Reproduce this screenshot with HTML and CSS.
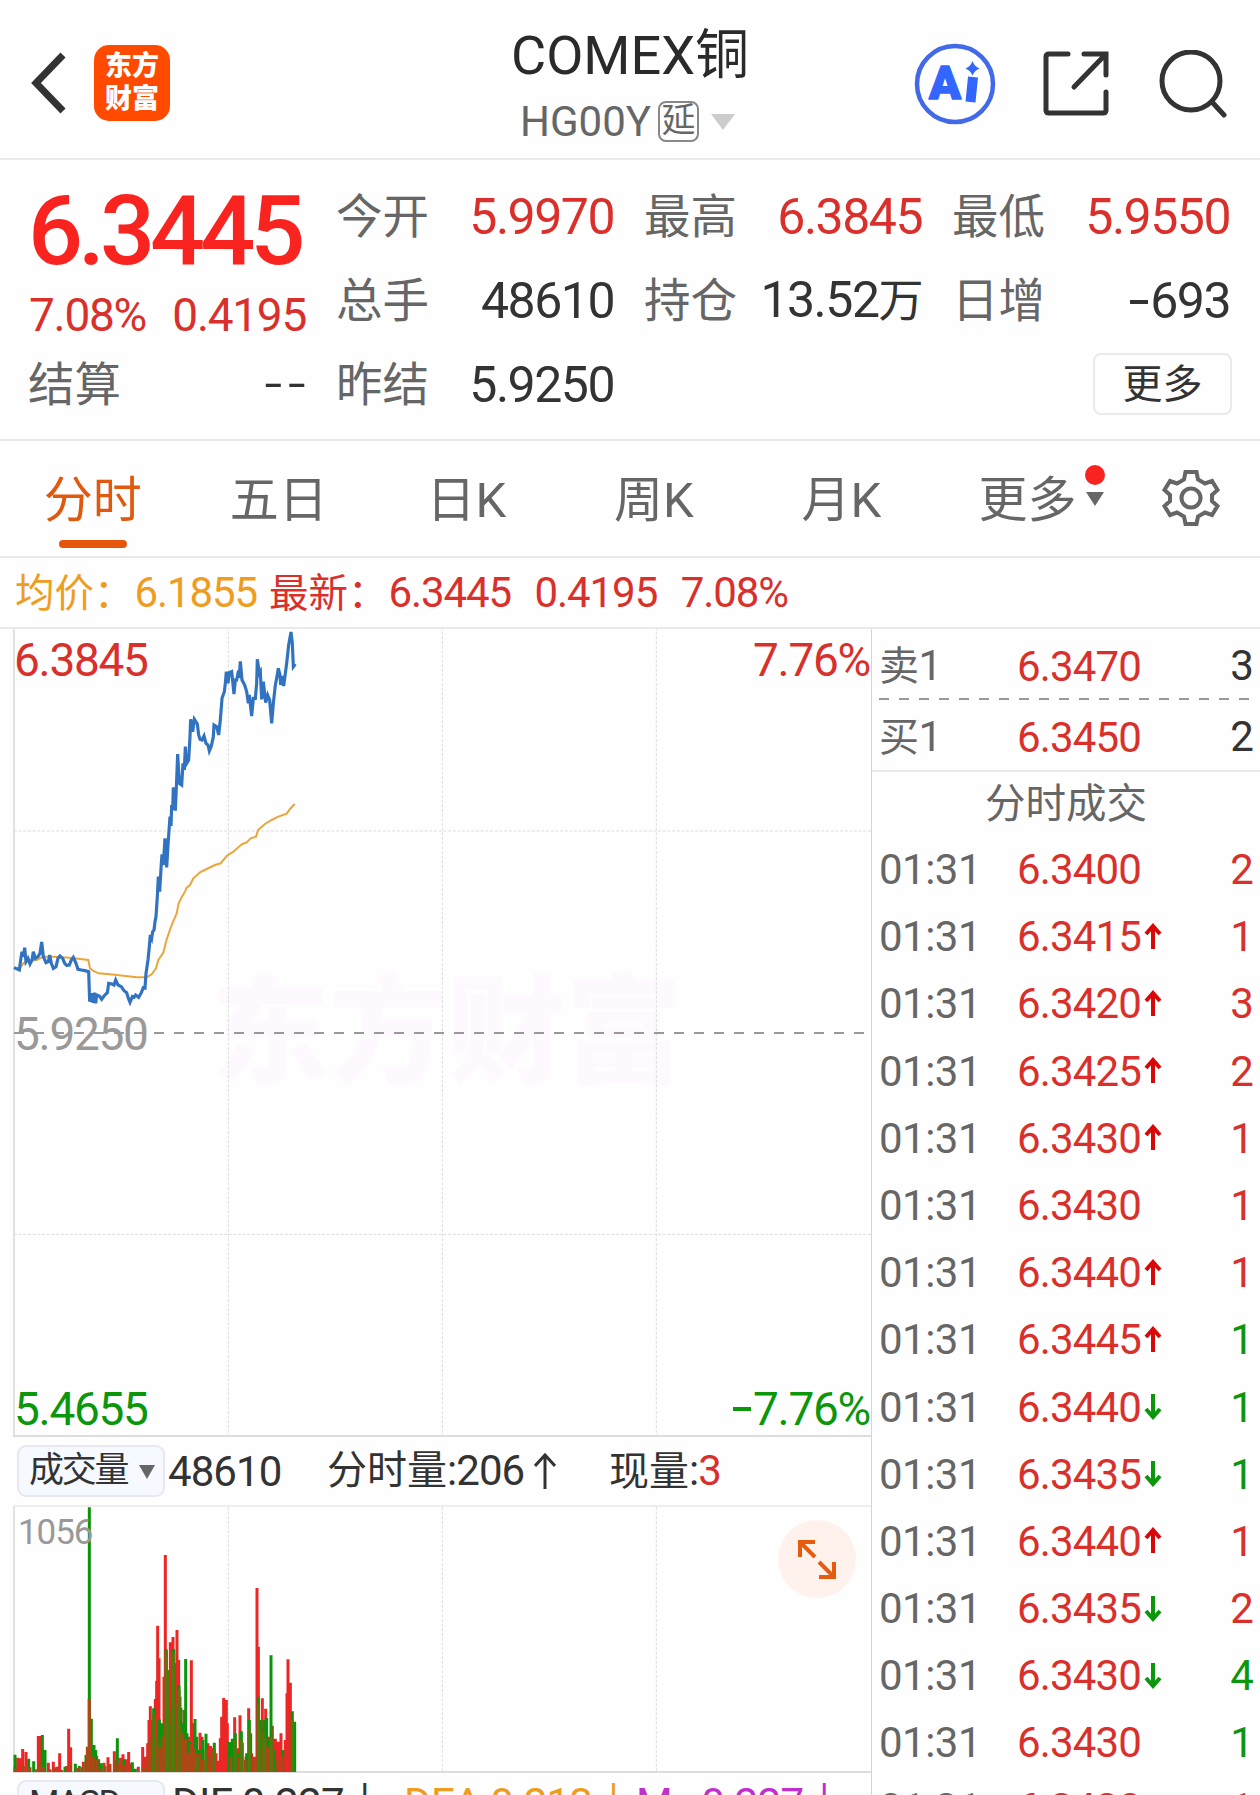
FILE: index.html
```html
<!DOCTYPE html>
<html lang="zh-CN">
<head>
    <meta charset="UTF-8">
    <meta name="viewport" content="width=device-width, initial-scale=1.0">
    <title>COMEX铜 HG00Y</title>
    <link rel="stylesheet" href="styles.css">
</head>
<body>
    <svg class="defs" width="0" height="0">
        <symbol id="up" viewBox="0 0 18 27"><path d="M9 26V3M2 11L9 3L16 11" fill="none" stroke="currentColor" stroke-width="4"/></symbol>
        <symbol id="down" viewBox="0 0 18 27"><path d="M9 1V24M2 16L9 24L16 16" fill="none" stroke="currentColor" stroke-width="4"/></symbol>
    </svg>

    <header class="header">
        <div class="header-left">
            <svg class="back" width="36" height="64" viewBox="0 0 36 64"><path d="M32 4L5 32L32 60" fill="none" stroke="#333" stroke-width="7"/></svg>
            <div class="logo"><span>东方</span><span>财富</span></div>
        </div>
        <div class="title">
            <h1>COMEX铜</h1>
            <div class="code">HG00Y<span class="delay">延</span><svg width="24" height="16" viewBox="0 0 24 16"><path d="M0 0H24L12 16Z" fill="#ccc"/></svg></div>
        </div>
        <div class="header-right">
            <svg width="82" height="82" viewBox="0 0 82 82">
                <circle cx="41" cy="41" r="38" fill="none" stroke="#4169ea" stroke-width="4.5"/>
                <text x="15" y="56" class="ai-text">A</text>
                <path d="M58.500 39L57 54" stroke="#36f" stroke-width="10" stroke-linecap="square"/>
                <path d="M58.500 18Q60.500 23.500 65.500 25.500Q60.500 27.500 58.500 32.500Q56.500 27.500 51.500 25.500Q56.500 23.500 58.500 18Z" fill="#36f"/>
            </svg>
            <svg class="share" width="66" height="66" viewBox="0 0 66 66" fill="none" stroke="#333" stroke-width="5" stroke-linecap="round">
                <path d="M25 3H6Q3 3 3 6V59Q3 62 6 62H60Q63 62 63 59V41M63 24V3H41M62 4L31 36"/>
            </svg>
            <svg width="68" height="68" viewBox="0 0 68 68" fill="none" stroke="#333" stroke-width="5" stroke-linecap="round">
                <circle cx="32" cy="31" r="29"/><path d="M53 52L65 65"/>
            </svg>
        </div>
    </header>

    <section class="quote">
        <div class="price-box">
            <div class="price">6.3445</div>
            <div class="change"><span>7.08%</span><span>0.4195</span></div>
        </div>
        <div class="cell"><label>今开</label><span class="red">5.9970</span></div>
        <div class="cell"><label>最高</label><span class="red">6.3845</span></div>
        <div class="cell"><label>最低</label><span class="red">5.9550</span></div>
        <div class="cell"><label>总手</label><span>48610</span></div>
        <div class="cell"><label>持仓</label><span>13.52<i>万</i></span></div>
        <div class="cell"><label>日增</label><span><b class="dash"></b>693</span></div>
        <div class="cell"><label>结算</label><span class="dashes">--</span></div>
        <div class="cell"><label>昨结</label><span>5.9250</span></div>
        <div class="more"><button>更多</button></div>
    </section>

    <nav class="tabs">
        <a class="active">分时</a>
        <a>五日</a>
        <a>日K</a>
        <a>周K</a>
        <a>月K</a>
        <a class="tab-more">更多<span class="mark"><i class="dot"></i><svg width="18" height="14" viewBox="0 0 18 14"><path d="M0 0H18L9 14Z" fill="#666"/></svg></span></a>
        <svg class="gear" width="60" height="60" viewBox="0 0 60 60" fill="none" stroke="#666" stroke-width="4">
            <path d="M24.500 4H35.500L37 11.500L44 15.500L51 13L56.500 22L51 27V33L56.500 38L51 47L44 44.500L37 48.500L35.500 56H24.500L23 48.500L16 44.500L9 47L3.500 38L9 33V27L3.500 22L9 13L16 15.500L23 11.500Z"/>
            <circle cx="30" cy="30" r="9.500"/>
        </svg>
    </nav>

    <div class="info">
        <span class="avg"><em>均价：</em>6.1855</span>
        <span class="last"><em>最新：</em>6.3445</span>
        <span>0.4195</span>
        <span>7.08%</span>
    </div>

    <main class="main">
        <div class="charts">
            <div class="chart">
                <svg width="858" height="807" viewBox="39 27 2574 2421" fill="none">
                    <text class="watermark" x="636" y="1361">东方财富</text>
                    <path class="grid" d="M685 21V2450M1327 21V2450M1969 21V2450M42 633H2613M42 1843H2613"/>
                    <path d="M42 21V2450" stroke="#ddd" stroke-width="5"/>
                    <path d="M42 1239H2613" stroke="#999" stroke-width="6" stroke-dasharray="30 30"/>
                    <polyline stroke="#eba63a" stroke-width="6" points="42,1043 60,1045 70,1030 85,1022 110,1020 130,1010 160,1010 210,1013 265,1020 270,1045 280,1053 296,1060 330,1063 370,1067 410,1072 440,1072 455,1063 468,1045 475,1020 490,998 500,958 515,915 530,880 536,850 545,832 555,815 560,803 570,795 580,775 600,757 620,747 645,735 662,730 680,708 700,695 725,673 740,667 752,655 768,650 774,630 795,612 815,600 835,590 860,581 870,567 884,552"/>
                    <polyline stroke="#3173c0" stroke-width="9.5" points="42,1043 58,1050 62,1020 66,995 70,1010 74,983 78,1025 84,1015 90,1032 96,1020 100,995 106,1015 114,1010 120,1000 125,966 130,1010 138,1028 145,1025 149,1005 154,1030 160,1045 168,1040 174,1015 180,1008 188,1015 194,1030 200,1036 208,1035 214,1020 220,1012 228,1030 234,1048 244,1050 255,1052 266,1055 269,1145 274,1120 279,1148 284,1118 287,1150 290,1125 298,1128 305,1138 312,1128 322,1118 326,1090 336,1092 342,1095 347,1080 354,1095 364,1100 372,1112 380,1118 385,1135 390,1147 397,1130 402,1132 407,1125 416,1132 424,1118 430,1103 435,1104 438,1060 444,1020 448,980 451,945 455,955 458,935 462,930 465,905 468,890 472,830 475,770 479,815 484,730 486,703 490,735 495,655 500,742 505,660 510,590 513,618 515,555 518,570 520,502 526,572 530,480 533,402 538,490 545,495 549,430 553,450 556,380 559,432 566,420 570,350 572,298 578,335 583,298 592,312 596,345 600,358 606,360 612,348 618,370 624,375 628,393 634,378 640,350 642,315 650,320 656,345 661,300 666,235 673,215 676,190 679,155 684,190 688,158 695,155 702,222 706,180 710,180 714,160 718,165 721,124 726,180 734,195 740,215 745,250 748,225 755,288 760,235 766,235 770,190 772,118 778,160 781,155 785,238 790,185 797,248 803,225 809,240 815,310 820,250 826,195 831,170 835,145 840,165 842,195 846,168 851,198 856,160 860,130 866,75 873,36 877,70 880,140 886,132"/>
                </svg>
                <span class="lab top-left red">6.3845</span>
                <span class="lab top-right red">7.76%</span>
                <span class="lab mid-left">5.9250</span>
                <span class="lab bottom-left green">5.4655</span>
                <span class="lab bottom-right green"><b class="dash"></b>7.76%</span>
            </div>

            <div class="vol-head">
                <span class="pill">成交量<svg width="16" height="14" viewBox="0 0 16 14"><path d="M0 0H16L8 14Z" fill="#666"/></svg></span>
                <span class="vol-total">48610</span>
                <span class="vol-min"><em>分时量</em>:206<svg width="22" height="36" viewBox="0 0 22 36"><path d="M11 36V2M1 13L11 2L21 13" fill="none" stroke="#333" stroke-width="3"/></svg></span>
                <span class="vol-now"><em>现量</em>:<span class="red">3</span></span>
            </div>

            <div class="volume">
                <svg width="858" height="265" viewBox="39 51 2574 795" fill="none">
                    <path class="grid" d="M685 51V847M1327 51V847M1969 51V847"/>
                    <path d="M42 51V847" stroke="#ddd" stroke-width="5"/>
                    <g stroke-width="9">
                        <path id="volRed" stroke="#ec2525"/>
                        <path id="volGreen" stroke="#0b930b"/>
                        <path id="volMix" stroke="#ad4716"/>
                        <path id="volDark" stroke="#4d7d0b"/>
                    </g>
                </svg>
                <span class="vol-max">1056</span>
                <div class="expand">
                    <svg width="38" height="40" viewBox="0 0 38 40" fill="none" stroke="#e55b10" stroke-width="4">
                        <path d="M2 18V3H17M3 4L17 18M36 23V38H21M35 37L21 23"/>
                    </svg>
                </div>
            </div>

            <div class="vol-head macd">
                <span class="pill">MACD</span>
                <span class="dif">DIF:0.227↓</span>
                <span class="dea">DEA:0.213↓</span>
                <span class="m">M: 0.227↓</span>
            </div>
        </div>

        <aside class="side">
            <div class="row ask"><span class="name"><em>卖</em>1</span><span class="red">6.3470</span><span class="qty">3</span></div>
            <svg class="split" width="372" height="2"><path d="M0 1H372" stroke="#999" stroke-width="2" stroke-dasharray="10 10"/></svg>
            <div class="row bid"><span class="name"><em>买</em>1</span><span class="red">6.3450</span><span class="qty">2</span></div>
            <h2>分时成交</h2>
            <div class="ticks">
                <div class="row"><span>01:31</span><span class="red">6.3400</span><span class="qty red">2</span></div>
                <div class="row"><span>01:31</span><span class="red">6.3415<svg class="up"><use href="#up"/></svg></span><span class="qty red">1</span></div>
                <div class="row"><span>01:31</span><span class="red">6.3420<svg class="up"><use href="#up"/></svg></span><span class="qty red">3</span></div>
                <div class="row"><span>01:31</span><span class="red">6.3425<svg class="up"><use href="#up"/></svg></span><span class="qty red">2</span></div>
                <div class="row"><span>01:31</span><span class="red">6.3430<svg class="up"><use href="#up"/></svg></span><span class="qty red">1</span></div>
                <div class="row"><span>01:31</span><span class="red">6.3430</span><span class="qty red">1</span></div>
                <div class="row"><span>01:31</span><span class="red">6.3440<svg class="up"><use href="#up"/></svg></span><span class="qty red">1</span></div>
                <div class="row"><span>01:31</span><span class="red">6.3445<svg class="up"><use href="#up"/></svg></span><span class="qty green">1</span></div>
                <div class="row"><span>01:31</span><span class="red">6.3440<svg class="down"><use href="#down"/></svg></span><span class="qty green">1</span></div>
                <div class="row"><span>01:31</span><span class="red">6.3435<svg class="down"><use href="#down"/></svg></span><span class="qty green">1</span></div>
                <div class="row"><span>01:31</span><span class="red">6.3440<svg class="up"><use href="#up"/></svg></span><span class="qty red">1</span></div>
                <div class="row"><span>01:31</span><span class="red">6.3435<svg class="down"><use href="#down"/></svg></span><span class="qty red">2</span></div>
                <div class="row"><span>01:31</span><span class="red">6.3430<svg class="down"><use href="#down"/></svg></span><span class="qty green">4</span></div>
                <div class="row"><span>01:31</span><span class="red">6.3430</span><span class="qty green">1</span></div>
                <div class="row last-row"><span>01:31</span><span class="red">6.3430</span><span class="qty red">1</span></div>
            </div>
        </aside>
    </main>

    <script>
        // x,top pairs, every bar stands on y = 847
        const volume = {
            volRed: '45,830 53,803 60,805 68,777 78,786 115,738 119,738 145,818 160,815 172,830 179,790 206,716 212,772 250,815 268,627 290,797 312,818 324,802 343,784 360,803 369,793 379,808 386,786 415,830 428,771 437,800 443,760 447,690 451,649 460,690 466,627 470,572 473,407 477,505 492,560 496,195 505,540 511,457 519,441 525,520 531,420 536,510 540,620 546,700 552,660 560,750 566,740 574,511 578,700 600,728 606,740 624,760 632,768 640,775 648,790 655,812 661,745 665,680 671,624 679,630 682,700 704,682 711,775 720,676 727,758 738,800 746,655 755,790 762,800 771,294 775,470 787,625 797,656 806,740 817,707 826,746 834,755 843,730 856,750 861,610 864,508 871,578 874,700',
            volGreen: '45,794 86,806 101,814 127,735 135,780 195,830 226,821 238,828 258,795 268,52 274,686 282,765 287,780 296,808 304,820 352,745 372,808 397,817 406,836 461,655 478,688 485,700 499,478 521,478 537,586 543,655 549,700 557,507 561,730 570,755 585,687 590,740 598,780 608,750 618,731 635,790 643,758 688,756 697,746 706,730 714,790 724,724 740,790 748,690 752,730 775,620 780,690 792,690 800,684 808,750 813,496 822,780 848,780 877,664 884,695',
            volMix: '47,836 56,842 70,828 90,832 110,838 119,820 129,830 150,838 165,832 185,840 200,828 212,820 234,834 246,832 262,770 268,627 270,760 280,800 291,808 300,836 315,828 330,822 345,810 355,820 365,830 375,826 390,820 430,830 440,805 450,750 456,740 463,720 470,740 480,770 488,740 494,660 503,630 510,700 518,720 526,640 533,690 541,710 548,730 556,750 565,790 573,760 582,775 590,790 600,790 610,810 625,800 633,790 642,780 692,800 704,760 716,800 724,790 735,810 765,810 785,780 795,750 803,770 818,780 832,810 846,800',
            volDark: '499,485 503,540 521,490 516,660 537,600 461,670 590,800 618,780 643,780 706,750 724,750 748,720 775,640 778,720 792,730 813,740 877,690'
        };

        for (const id in volume) {
            const d = volume[id].split(' ').map(p => {
                const xy = p.split(',');
                return 'M' + xy[0] + ' 847V' + xy[1];
            });
            document.getElementById(id).setAttribute('d', d.join(''));
        }
    </script>
</body>
</html>
```
FILE: styles.css
```css
* {
    box-sizing: border-box;
}
body {
    margin: 0;
    width: 1260px;
    height: 1795px;
    overflow: hidden;
    background-color: #fefefe;
    color: #333;
    font-family: Roboto, "Noto Sans CJK SC", sans-serif;
}
svg {
    display: block;
    flex: none;
}
em, i {
    font-style: normal;
}
.defs {
    display: none;
}
.red {
    color: #d9302c;
}
.green {
    color: #0b960b;
}
.dash {
    display: inline-block;
    width: 18px;
    height: 4px;
    margin-right: 2px;
    vertical-align: 14px;
    background-color: currentColor;
}

/* header */
.header {
    display: grid;
    grid-template-columns: 1fr auto 1fr;
    height: 160px;
    border-bottom: 2px solid #e9e9ee;
}
.header-left {
    display: flex;
    align-items: center;
    gap: 27px;
    padding: 8px 0 0 31px;
}
.logo {
    display: flex;
    flex-direction: column;
    align-items: center;
    width: 76px;
    height: 76px;
    padding-top: 5px;
    border-radius: 15px;
    background-color: #ff4a00;
    color: #fff;
    font-size: 27px;
    font-weight: 900;
    line-height: 33px;
}
.title {
    display: flex;
    flex-direction: column;
    align-items: center;
    padding-top: 23px;
}
.title h1 {
    margin: 0;
    font-size: 54px;
    font-weight: 400;
    line-height: 66px;
    color: #2a2a2a;
}
.code {
    display: flex;
    align-items: center;
    height: 65px;
    margin-left: -5px;
    font-size: 42px;
    color: #666;
}
.delay {
    width: 41px;
    height: 41px;
    margin: 0 12px 0 7px;
    border: 2px solid #888;
    border-radius: 8px;
    font-size: 34px;
    line-height: 35px;
    text-align: center;
}
.header-right {
    display: flex;
    align-items: center;
    justify-content: flex-end;
    padding: 9px 33px 0 0;
}
.share {
    margin: 0 50px 0 47px;
}
.ai-text {
    font-family: Roboto, sans-serif;
    font-size: 47px;
    font-weight: 900;
    fill: #36f;
    stroke: #36f;
    stroke-width: 1.5;
    stroke-linejoin: round;
}

/* quote */
.quote {
    display: grid;
    grid-template-columns: repeat(4, 278px);
    grid-template-rows: repeat(3, 84px);
    column-gap: 30px;
    height: 281px;
    padding: 15px 28px 12px;
    border-bottom: 2px solid #e9e9e9;
}
.price-box {
    grid-row: span 2;
}
.price {
    height: 113px;
    font-size: 97px;
    font-weight: 500;
    line-height: 112px;
    letter-spacing: -.052em;
    color: #f92320;
}
.change {
    display: flex;
    justify-content: space-between;
    padding-left: 1px;
    font-size: 46px;
    line-height: 54px;
    letter-spacing: -.028em;
    color: #d9302c;
}
.cell {
    display: flex;
    align-items: center;
    justify-content: space-between;
    font-size: 50px;
    line-height: 84px;
    letter-spacing: -.03em;
}
.cell label {
    font-size: 46.5px;
    letter-spacing: 0;
    color: #666;
}
.cell i {
    font-size: 45px;
}
.cell .dashes {
    font-size: 64px;
    font-weight: 300;
    letter-spacing: 5px;
    margin-right: -5px;
}
.more {
    grid-column: 4;
    display: flex;
    align-items: center;
    justify-content: flex-end;
    margin: -2px -2px 0 0;
}
.more button {
    width: 139px;
    height: 62px;
    padding: 0 0 7px;
    border: 2px solid #e9e9ee;
    border-radius: 8px;
    background-color: #fefefe;
    font-family: "Noto Sans CJK SC", sans-serif;
    font-size: 40px;
    line-height: 50px;
    color: #333;
}

/* tabs */
.tabs {
    display: grid;
    grid-template-columns: repeat(5, 187.5px) 1fr 99px;
    height: 117px;
    border-bottom: 2px solid #e9e9e9;
    font-size: 49px;
    line-height: 120px;
    text-align: center;
    color: #666;
}
.tabs a {
    padding-right: 5px;
}
.tabs .active {
    position: relative;
    padding-right: 2px;
    color: #e0590f;
}
.tabs .active::after {
    content: "";
    position: absolute;
    left: 59px;
    top: 99px;
    width: 68px;
    height: 8px;
    border-radius: 4px;
    background-color: #e6550c;
}
.tabs .tab-more {
    display: flex;
    padding: 0 0 0 41px;
}
.mark {
    display: flex;
    flex-direction: column;
    align-items: center;
    gap: 7px;
    padding: 24px 0 0 8px;
}
.dot {
    width: 20px;
    height: 20px;
    border-radius: 50%;
    background-color: #f92320;
}
.gear {
    margin-top: 27px;
}

/* average / last */
.info {
    display: flex;
    height: 71px;
    padding-left: 15px;
    border-bottom: 2px solid #e9e9e9;
    font-size: 42px;
    line-height: 69px;
    letter-spacing: -.026em;
    color: #d9302c;
}
.info span {
    margin-right: 23.5px;
}
.info em {
    margin-right: 1px;
    font-size: 39.5px;
    letter-spacing: 0;
}
.info .avg {
    margin-right: 12px;
    color: #ee9d20;
}

/* charts */
.main {
    display: grid;
    grid-template-columns: 871px 389px;
}
.charts {
    padding-left: 13px;
}
.chart {
    position: relative;
    height: 808px;
    border-bottom: 2px solid #ddd;
}
.chart svg, .volume > svg {
    overflow: hidden;
}
.grid {
    stroke: #ddd;
    stroke-width: 3;
    stroke-dasharray: 9 5;
}
.watermark {
    font-family: "Noto Sans CJK SC", sans-serif;
    font-size: 353px;
    font-weight: 900;
    fill: #fef9fe;
}
.lab {
    position: absolute;
    font-size: 46px;
    line-height: 54px;
    letter-spacing: -.028em;
}
.top-left {
    left: 1px;
    top: 4px;
}
.top-right {
    right: 1px;
    top: 4px;
}
.mid-left {
    left: 1px;
    top: 378px;
    color: #999;
}
.bottom-left {
    left: 1px;
    bottom: -1px;
}
.bottom-right {
    right: 1px;
    bottom: -1px;
}
.vol-head {
    display: flex;
    align-items: center;
    height: 68px;
    padding-left: 4px;
    font-size: 42px;
    line-height: 52px;
    letter-spacing: -.022em;
    white-space: nowrap;
}
.vol-head em {
    font-size: 40px;
    letter-spacing: 0;
}
.pill {
    display: flex;
    align-items: center;
    width: 148px;
    height: 52px;
    padding-left: 10px;
    border: 2px solid #e8e8f0;
    border-radius: 9px;
    background-color: #f6f9ff;
    font-size: 35px;
    line-height: 44px;
    letter-spacing: -2.3px;
}
.pill svg {
    margin: 2px 0 0 12px;
}
.vol-total {
    width: 162px;
    padding: 1px 0 0 3px;
}
.vol-min {
    display: flex;
    align-items: center;
    width: 282px;
}
.vol-min svg {
    margin-left: 10px;
}
.volume {
    position: relative;
    height: 268px;
    border-top: 2px solid #eee;
    border-bottom: 2px solid #ddd;
}
.vol-max {
    position: absolute;
    left: 5px;
    top: 5px;
    font-size: 35px;
    line-height: 41px;
    letter-spacing: -.03em;
    color: #999;
}
.expand {
    position: absolute;
    right: 15px;
    top: 13px;
    display: flex;
    align-items: center;
    justify-content: center;
    width: 78px;
    height: 78px;
    border-radius: 50%;
    background-color: #fff2ec;
}
.macd {
    align-items: flex-start;
    padding-top: 7px;
    line-height: 48px;
    letter-spacing: -.016em;
}
.macd .pill {
    flex: none;
    margin-right: 7px;
    line-height: 40px;
    padding-bottom: 4px;
}
.dif {
    width: 232px;
}
.dea {
    width: 232px;
    color: #ee9d20;
}
.m {
    word-spacing: 10px;
    color: #c22fd0;
}

/* order book and ticks */
.side {
    height: 1166px;
    overflow: hidden;
    border-left: 1px solid #d5d5d9;
}
.row {
    display: grid;
    grid-template-columns: 138px 1fr auto;
    height: 67.2px;
    padding: 0 7px;
    font-size: 42px;
    line-height: 68px;
    letter-spacing: -.02em;
}
.row > span:first-child {
    letter-spacing: -.012em;
    color: #666;
}
.row > span:nth-child(2) {
    display: flex;
    align-items: center;
}
.row svg {
    width: 18px;
    height: 27px;
    margin: 0 0 2px 3px;
}
.row .up {
    color: #d90808;
}
.row .down {
    color: #0b960b;
}
.row em {
    font-size: 40px;
}
.ticks .last-row {
    height: 64px;
    line-height: 64px;
}
.ask {
    height: 69px;
    line-height: 74px;
}
.split {
    margin-left: 7px;
}
.bid {
    height: 70px;
    line-height: 74px;
}
.side h2 {
    margin: 0;
    height: 66px;
    border-top: 2px solid #e9e9e9;
    font-size: 40.500px;
    font-weight: 400;
    line-height: 64px;
    text-align: center;
    color: #666;
}
```
